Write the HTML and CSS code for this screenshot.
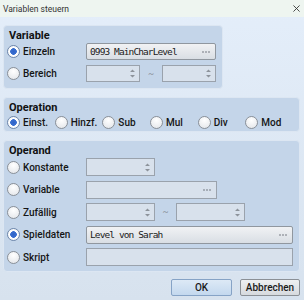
FILE: index.html
```html
<!DOCTYPE html>
<html lang="de">
<head>
    <meta charset="UTF-8">
    <title>Variablen steuern</title>
    <link rel="stylesheet" href="styles.css">
</head>
<body>
<div class="window">
    <div class="titlebar">
        <span class="title">Variablen steuern</span>
        <svg class="close" viewBox="0 0 8 8"><path d="M0.5 0.5 L7.5 7.5 M7.5 0.5 L0.5 7.5" stroke="#333" stroke-width="1"/></svg>
    </div>

    <div class="content">
        <!-- Variable -->
        <div class="group group-variable">
            <div class="group-title">Variable</div>
            <div class="rows">
                <div class="row">
                    <label class="radio checked"><span class="dot"></span>Einzeln</label>
                    <div class="picker">
                        <span class="mono">0993 MainCharLevel</span>
                        <svg class="more" viewBox="0 0 8 2"><circle cx="1" cy="1" r="0.8"/><circle cx="4" cy="1" r="0.8"/><circle cx="7" cy="1" r="0.8"/></svg>
                    </div>
                </div>
                <div class="row">
                    <label class="radio"><span class="dot"></span>Bereich</label>
                    <div class="range">
                        <div class="box spin small">
                            <svg class="arrows" viewBox="0 0 5 9"><path d="M2.5 0.5 L5 3 L0 3 Z M0 6 L5 6 L2.5 8.5 Z"/></svg>
                        </div>
                        <span class="tilde">~</span>
                        <div class="box spin small">
                            <svg class="arrows" viewBox="0 0 5 9"><path d="M2.5 0.5 L5 3 L0 3 Z M0 6 L5 6 L2.5 8.5 Z"/></svg>
                        </div>
                    </div>
                </div>
            </div>
        </div>

        <!-- Operation -->
        <div class="group group-operation">
            <div class="group-title">Operation</div>
            <div class="op-row">
                <label class="radio checked"><span class="dot"></span>Einst.</label>
                <label class="radio"><span class="dot"></span>Hinzf.</label>
                <label class="radio"><span class="dot"></span>Sub</label>
                <label class="radio"><span class="dot"></span>Mul</label>
                <label class="radio"><span class="dot"></span>Div</label>
                <label class="radio"><span class="dot"></span>Mod</label>
            </div>
        </div>

        <!-- Operand -->
        <div class="group group-operand">
            <div class="group-title">Operand</div>
            <div class="rows">
                <div class="row">
                    <label class="radio"><span class="dot"></span>Konstante</label>
                    <div>
                        <div class="box spin medium">
                            <svg class="arrows" viewBox="0 0 5 9"><path d="M2.5 0.5 L5 3 L0 3 Z M0 6 L5 6 L2.5 8.5 Z"/></svg>
                        </div>
                    </div>
                </div>
                <div class="row">
                    <label class="radio"><span class="dot"></span>Variable</label>
                    <div>
                        <div class="box field">
                            <svg class="more" viewBox="0 0 8 2"><circle cx="1" cy="1" r="0.8"/><circle cx="4" cy="1" r="0.8"/><circle cx="7" cy="1" r="0.8"/></svg>
                        </div>
                    </div>
                </div>
                <div class="row">
                    <label class="radio"><span class="dot"></span>Zufällig</label>
                    <div class="range">
                        <div class="box spin medium">
                            <svg class="arrows" viewBox="0 0 5 9"><path d="M2.5 0.5 L5 3 L0 3 Z M0 6 L5 6 L2.5 8.5 Z"/></svg>
                        </div>
                        <span class="tilde">~</span>
                        <div class="box spin medium">
                            <svg class="arrows" viewBox="0 0 5 9"><path d="M2.5 0.5 L5 3 L0 3 Z M0 6 L5 6 L2.5 8.5 Z"/></svg>
                        </div>
                    </div>
                </div>
                <div class="row">
                    <label class="radio checked"><span class="dot"></span>Spieldaten</label>
                    <div class="picker">
                        <span class="mono">Level von Sarah</span>
                        <svg class="more" viewBox="0 0 8 2"><circle cx="1" cy="1" r="0.8"/><circle cx="4" cy="1" r="0.8"/><circle cx="7" cy="1" r="0.8"/></svg>
                    </div>
                </div>
                <div class="row">
                    <label class="radio"><span class="dot"></span>Skript</label>
                    <div class="box"></div>
                </div>
            </div>
        </div>

        <div class="actions">
            <button class="btn btn-ok">OK</button>
            <button class="btn btn-cancel">Abbrechen</button>
        </div>
    </div>
</div>
</body>
</html>
```

FILE: styles.css
```css
* {
    box-sizing: border-box;
}

body {
    margin: 0;
    font-family: Roboto, "Noto Sans", sans-serif;
    font-size: 10px;
    color: #1b1b1b;
}

.window {
    width: 304px;
    height: 300px;
    overflow: hidden;
    background: linear-gradient(#e4eefa, #d7e2ee);
}

.titlebar {
    height: 17px;
    display: flex;
    align-items: center;
    justify-content: space-between;
    padding: 0 4px 0 3px;
    background: #eef5f0;
}

.title {
    font-size: 8.5px;
    color: #333;
}

.close {
    width: 7px;
    height: 7px;
}

.content {
    padding: 8px 4px 0 3px;
}

/* group boxes */
.group {
    background: #c4d5e9;
    border: 1px solid #dce6f2;
    border-radius: 4px;
    padding: 2px 6px 6px 3px;
}

.group + .group {
    margin-top: 8px;
}

.group-variable {
    width: 220px;
}

.group-operation {
    padding-bottom: 2px;
}

.group-operand {
    padding-bottom: 5px;
}

.group-title {
    font-size: 11px;
    font-weight: 700;
    line-height: 15px;
    padding-left: 2px;
    color: #111;
}

.rows {
    display: flex;
    flex-direction: column;
    gap: 5px;
}

.group-operand .rows {
    gap: 4.5px;
}

.row {
    display: grid;
    grid-template-columns: 79px 1fr;
    align-items: center;
    height: 17px;
}

.group-operand .row {
    height: 18px;
}

.row > div {
    height: 100%;
}

/* radio buttons */
.radio {
    display: flex;
    align-items: center;
    gap: 3px;
    font-weight: 500;
    white-space: nowrap;
    color: #151515;
}

.dot {
    width: 13px;
    height: 13px;
    flex: none;
    border-radius: 50%;
    border: 1px solid #8a9098;
    background: radial-gradient(circle at 50% 30%, #ffffff, #e1e4e8);
}

.radio.checked .dot {
    border-color: #6d86aa;
    background: radial-gradient(circle, #2f63c8 0, #3a6fd0 3px, #ffffff 3.6px, #eef0f3);
}

.op-row {
    display: flex;
    height: 14px;
    align-items: center;
}

.op-row .radio {
    width: 49.2px;
}

/* inputs */
.box {
    height: 100%;
    background: #d8e1ec;
    border: 1px solid #9aa2ac;
}

.spin {
    display: flex;
    align-items: center;
    justify-content: flex-end;
    padding-right: 4px;
}

.spin.small {
    width: 54px;
}

.spin.medium {
    width: 69px;
}

.arrows {
    width: 5px;
    height: 9px;
    fill: #8d939b;
}

.field {
    width: 131px;
    display: flex;
    align-items: center;
    justify-content: flex-end;
    padding-right: 5px;
}

.range {
    display: flex;
    align-items: center;
}

.group-variable .tilde {
    width: 22px;
}

.group-operand .tilde {
    width: 21px;
}

.tilde {
    text-align: center;
    color: #8a9098;
    font-size: 9px;
}

.picker {
    display: flex;
    align-items: center;
    justify-content: space-between;
    padding: 0 5px 0 3px;
    background: linear-gradient(#f1f2f4, #d9dee4);
    border: 1px solid #90979f;
    border-radius: 2px;
}

.mono {
    font-family: "DejaVu Sans Mono", monospace;
    font-size: 9.5px;
    letter-spacing: -0.9px;
    color: #1a1a1a;
}

.more {
    width: 8px;
    height: 2px;
    fill: #666c74;
}

/* dialog buttons */
.actions {
    display: flex;
    justify-content: flex-end;
    gap: 8px;
    margin-top: 7px;
}

.btn {
    height: 17px;
    padding: 0;
    font-family: Roboto, "Noto Sans", sans-serif;
    font-size: 10px;
    font-weight: 500;
    color: #1b1b1b;
    border-radius: 2px;
}

.btn-ok {
    width: 61px;
    background: linear-gradient(#dde9f6, #c3d8ee);
    border: 1px solid #86a3c6;
}

.btn-cancel {
    width: 60px;
    background: linear-gradient(#eef0f2, #d6dade);
    border: 1px solid #8b9096;
}
```
